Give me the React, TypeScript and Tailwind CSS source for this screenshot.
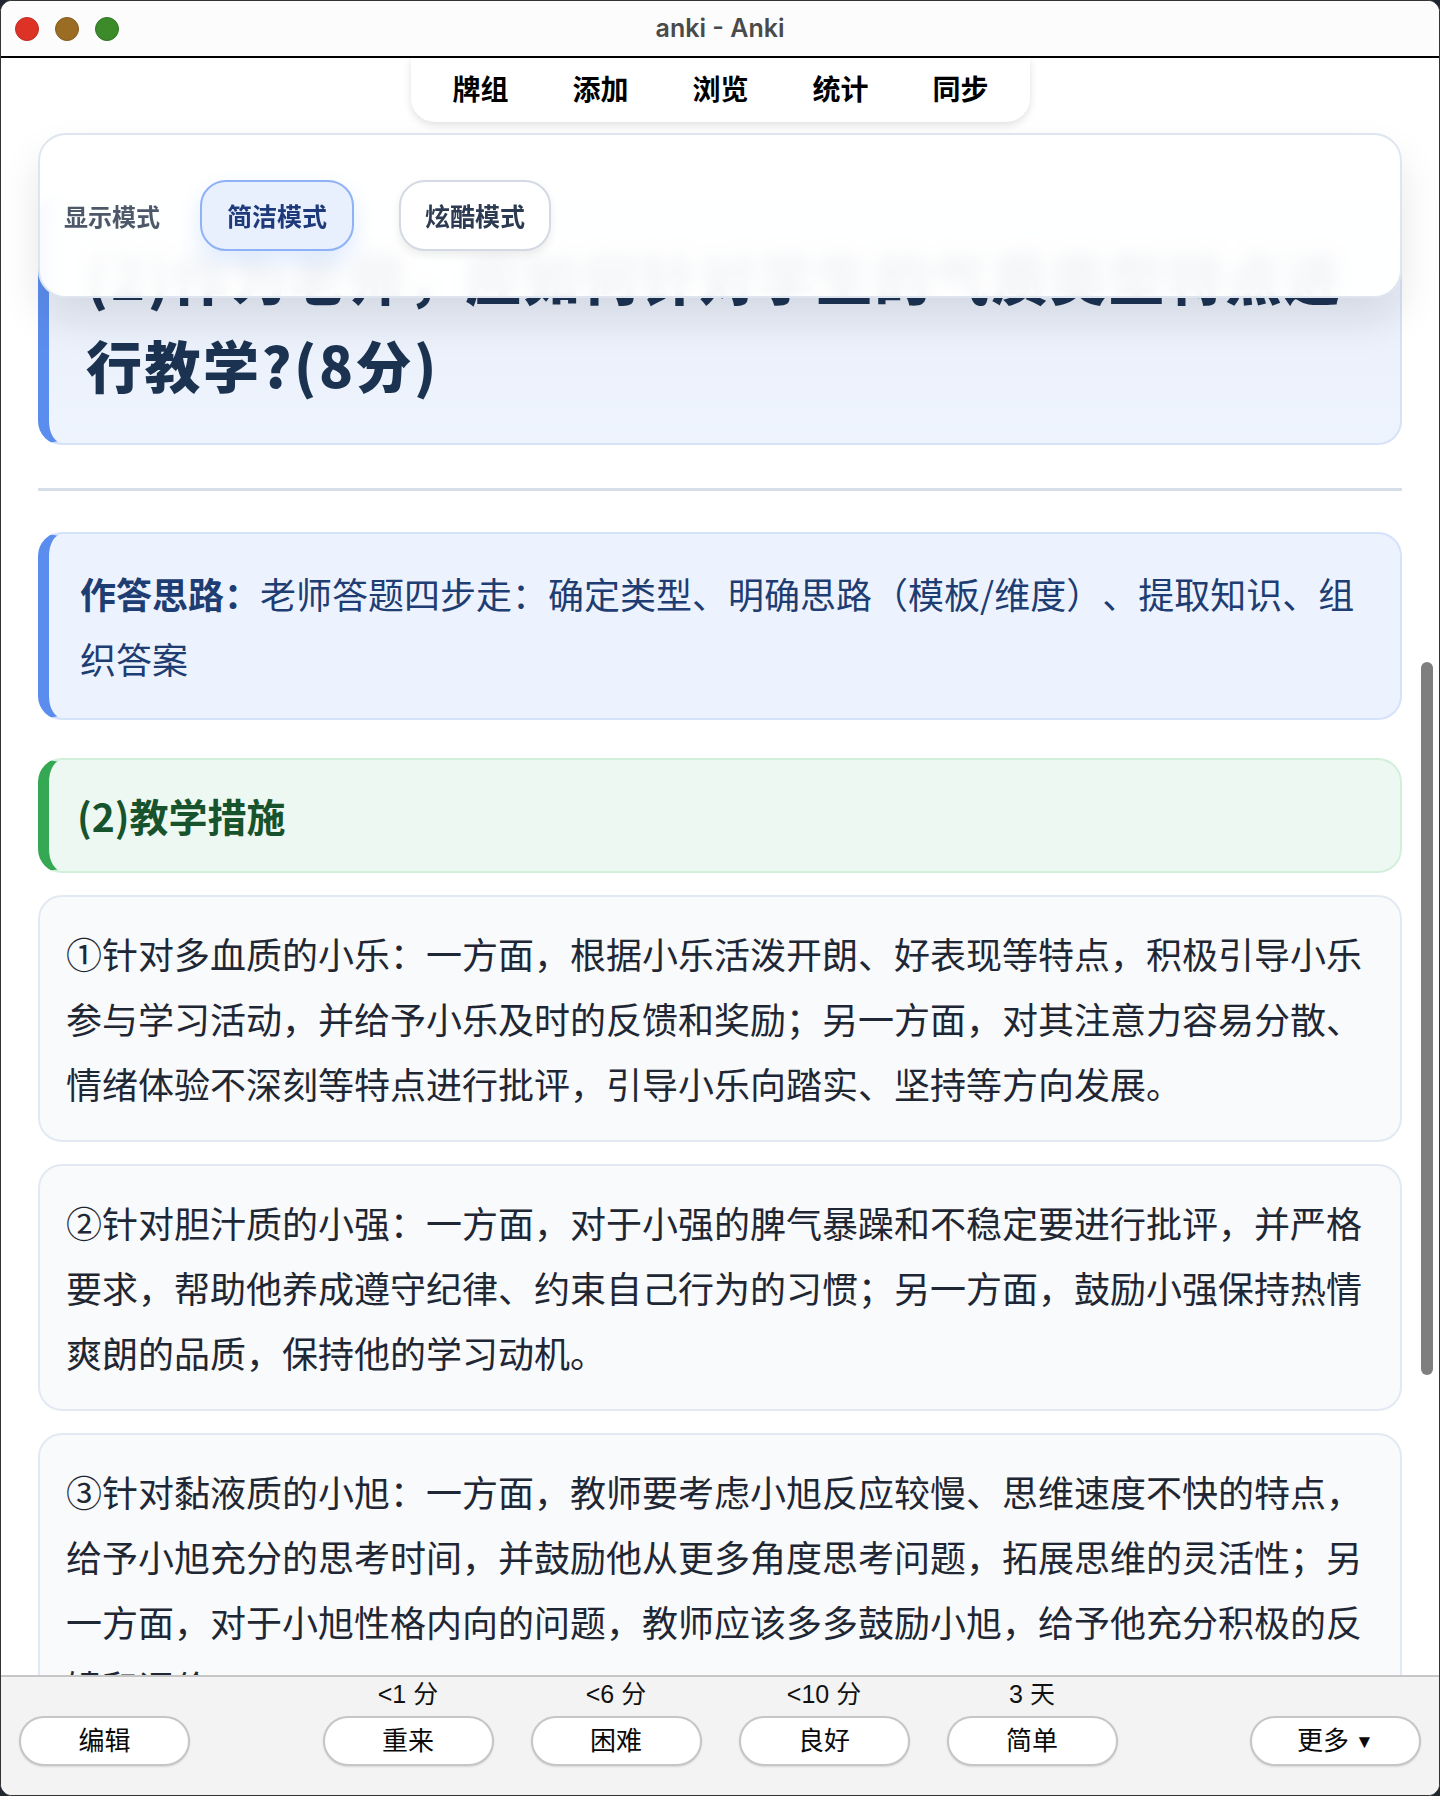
const tabs = ["牌组", "添加", "浏览", "统计", "同步"];

const cards = [
  [
    "①针对多血质的小乐：一方面，根据小乐活泼开朗、好表现等特点，积极引导小乐",
    "参与学习活动，并给予小乐及时的反馈和奖励；另一方面，对其注意力容易分散、",
    "情绪体验不深刻等特点进行批评，引导小乐向踏实、坚持等方向发展。",
  ],
  [
    "②针对胆汁质的小强：一方面，对于小强的脾气暴躁和不稳定要进行批评，并严格",
    "要求，帮助他养成遵守纪律、约束自己行为的习惯；另一方面，鼓励小强保持热情",
    "爽朗的品质，保持他的学习动机。",
  ],
  [
    "③针对黏液质的小旭：一方面，教师要考虑小旭反应较慢、思维速度不快的特点，",
    "给予小旭充分的思考时间，并鼓励他从更多角度思考问题，拓展思维的灵活性；另",
    "一方面，对于小旭性格内向的问题，教师应该多多鼓励小旭，给予他充分积极的反",
    "馈和评价。",
  ],
];

const answers = [
  { label: "重来", time: "<1 分" },
  { label: "困难", time: "<6 分" },
  { label: "良好", time: "<10 分" },
  { label: "简单", time: "3 天" },
];

function BarButton({ label, time, more }: { label: string; time?: string; more?: boolean }) {
  return (
    <div className="flex flex-col items-center">
      <div className="h-[30px] text-[25px] leading-[30px] text-[#111]">{time ?? ""}</div>
      <button className="mt-[7px] w-[171px] h-[50px] rounded-full bg-white border-2 border-[#c6c6c6] shadow-[0_1px_2px_rgba(0,0,0,0.12)] flex items-center justify-center text-[26px] text-[#0a0a0a]">
        {label}
        {more && <span className="text-[19px] ml-[6px] mt-[3px]">▼</span>}
      </button>
    </div>
  );
}

export default function App() {
  return (
    <div className="w-[1440px] h-[1796px] bg-[#1f2630] font-['Noto_Sans_CJK_SC',sans-serif] [text-spacing-trim:space-all]">
      <div className="h-full flex flex-col rounded-[12px] overflow-hidden bg-white border border-[#333]">
        {/* TITLE BAR */}
        <header className="relative h-[57px] shrink-0 bg-[#fcfcfc] border-b-2 border-black flex items-center">
          <div className="flex items-center gap-[16px] pl-[14px]">
            <span className="w-[24px] h-[24px] rounded-full bg-[#dd3327] border border-[#c02a20]" />
            <span className="w-[24px] h-[24px] rounded-full bg-[#9b6c24] border border-[#845a1c]" />
            <span className="w-[24px] h-[24px] rounded-full bg-[#3c8b2b] border border-[#2f7322]" />
          </div>
          <div className="absolute inset-0 flex items-center justify-center pointer-events-none">
            <span className="font-['Inter',sans-serif] text-[25px] font-semibold text-[#4a4a4a]">anki - Anki</span>
          </div>
        </header>

        {/* WEBVIEW */}
        <main className="relative flex-1 overflow-hidden bg-white">
          <div className="px-[37px] pt-[137px]">
            {/* question */}
            <div className="rounded-[24px] bg-gradient-to-b from-[#e9eef7] to-[#eef4fe] border-2 border-[#d6e2f7] border-l-[11px] border-l-[#5b8dee] pt-[35px] pb-[35px] pl-[37px] pr-[30px] text-[56px] leading-[88px] font-black tracking-[2.5px] text-[#1b3351]">
              <div className="whitespace-nowrap">(2)作为老师，应如何针对学生的气质类型特点进</div>
              <div className="whitespace-nowrap">行教学?(8分)</div>
            </div>

            <div className="mt-[43px] h-[3px] bg-[#d6dee9]" />

            {/* hint */}
            <div className="mt-[41px] rounded-[24px] bg-[#edf3fe] border-2 border-[#d5e2fb] border-l-[11px] border-l-[#5b8def] py-[27px] pl-[31px] pr-[30px] text-[36px] leading-[65px] text-[#1e3d72]">
              <div className="whitespace-nowrap">
                <span className="font-bold">作答思路：</span>老师答题四步走：确定类型、明确思路（模板/维度）、提取知识、组
              </div>
              <div className="whitespace-nowrap">织答案</div>
            </div>

            {/* section heading */}
            <div className="mt-[38px] rounded-[24px] bg-[#eef8f2] border-2 border-[#d2efdc] border-l-[11px] border-l-[#34a853] py-[26px] pl-[28px] pr-[34px] text-[39px] leading-[59px] font-bold text-[#17532c]">
              (2)教学措施
            </div>

            {cards.map((lines, i) => (
              <div
                key={i}
                className="mt-[22px] rounded-[24px] bg-[#f8fafc] border-2 border-[#e3e9f2] py-[24px] pl-[26px] pr-[26px] text-[36px] leading-[65px] text-[#1f2734]"
              >
                {lines.map((l) => (
                  <div key={l} className="whitespace-nowrap">
                    {l}
                  </div>
                ))}
              </div>
            ))}
          </div>

          {/* TOP NAV */}
          <nav className="absolute top-0 left-[410px] w-[619px] h-[64px] pb-[4px] bg-white rounded-b-[24px] shadow-[0_3px_8px_rgba(0,0,0,0.12)] flex items-center justify-center gap-[64px]">
            {tabs.map((t) => (
              <span key={t} className="text-[28px] font-bold text-black">
                {t}
              </span>
            ))}
          </nav>

          {/* DISPLAY MODE PANEL */}
          <div className="absolute top-[75px] left-[37px] right-[37px] h-[165px] rounded-[28px] border-2 border-[#dfe5ef] bg-white/95 backdrop-blur shadow-[0_22px_40px_rgba(15,23,42,0.10)] flex items-center pl-[24px]">
            <span className="text-[24px] font-semibold text-[#4d5868]">显示模式</span>
            <button className="ml-[40px] w-[154px] h-[71px] rounded-[26px] bg-[#e8f0fe] border-2 border-[#8fb1f5] shadow-[0_10px_22px_rgba(59,130,246,0.16)] text-[25px] font-bold text-[#1e3a7b]">
              简洁模式
            </button>
            <button className="ml-[45px] w-[152px] h-[71px] rounded-[26px] bg-white border-2 border-[#d4d9e3] shadow-[0_4px_10px_rgba(0,0,0,0.08)] text-[25px] font-bold text-[#2c3b52]">
              炫酷模式
            </button>
          </div>

          {/* SCROLLBAR */}
          <div className="absolute right-[6px] top-[604px] w-[12px] h-[713px] rounded-full bg-[#7f7f7f]" />
        </main>

        {/* ANSWER BAR */}
        <footer className="h-[120px] shrink-0 bg-[#f3f3f3] border-t-2 border-[#c6c6c6] px-[18px] pt-[2px] flex justify-between font-['Liberation_Sans','Noto_Sans_CJK_SC',sans-serif]">
          <BarButton label="编辑" />
          <div className="flex gap-[37px]">
            {answers.map((a) => (
              <BarButton key={a.label} label={a.label} time={a.time} />
            ))}
          </div>
          <BarButton label="更多" more />
        </footer>
      </div>
    </div>
  );
}
